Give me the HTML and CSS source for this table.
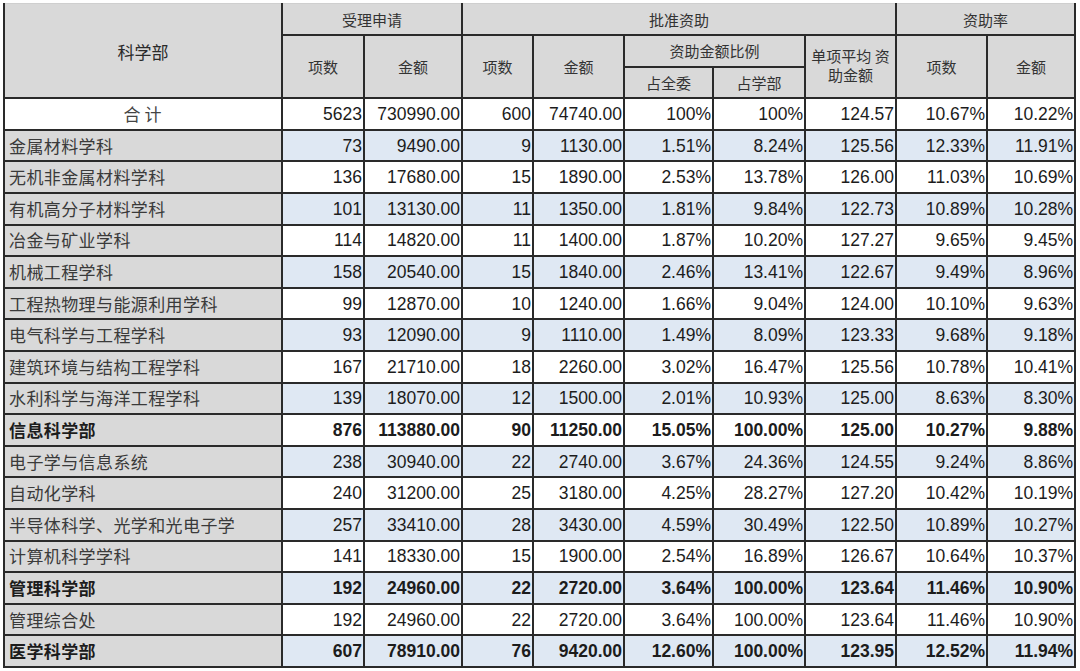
FILE: index.html
```html
<!DOCTYPE html>
<html lang="zh">
<head>
<meta charset="utf-8">
<title>科学部资助统计</title>
<link rel="stylesheet" href="styles.css">
</head>
<body>
<table class="grid">
  <colgroup>
    <col class="c-name"><col class="c-a"><col class="c-b"><col class="c-c"><col class="c-d">
    <col class="c-e"><col class="c-f"><col class="c-g"><col class="c-h"><col class="c-i">
  </colgroup>
  <thead>
    <tr class="hr">
      <th rowspan="3" class="h-main">科学部</th>
      <th colspan="2">受理申请</th>
      <th colspan="5">批准资助</th>
      <th colspan="2">资助率</th>
    </tr>
    <tr class="hr">
      <th rowspan="2">项数</th>
      <th rowspan="2">金额</th>
      <th rowspan="2">项数</th>
      <th rowspan="2">金额</th>
      <th colspan="2">资助金额比例</th>
      <th rowspan="2" class="h-wrap">单项平均 资助金额</th>
      <th rowspan="2">项数</th>
      <th rowspan="2">金额</th>
    </tr>
    <tr class="hr">
      <th>占全委</th>
      <th>占学部</th>
    </tr>
  </thead>
  <tbody>
    <tr class="total"><td class="name center">合计</td><td>5623</td><td>730990.00</td><td>600</td><td>74740.00</td><td>100%</td><td>100%</td><td>124.57</td><td>10.67%</td><td>10.22%</td></tr>
    <tr class="blue"><td class="name">金属材料学科</td><td>73</td><td>9490.00</td><td>9</td><td>1130.00</td><td>1.51%</td><td>8.24%</td><td>125.56</td><td>12.33%</td><td>11.91%</td></tr>
    <tr><td class="name">无机非金属材料学科</td><td>136</td><td>17680.00</td><td>15</td><td>1890.00</td><td>2.53%</td><td>13.78%</td><td>126.00</td><td>11.03%</td><td>10.69%</td></tr>
    <tr class="blue"><td class="name">有机高分子材料学科</td><td>101</td><td>13130.00</td><td>11</td><td>1350.00</td><td>1.81%</td><td>9.84%</td><td>122.73</td><td>10.89%</td><td>10.28%</td></tr>
    <tr><td class="name">冶金与矿业学科</td><td>114</td><td>14820.00</td><td>11</td><td>1400.00</td><td>1.87%</td><td>10.20%</td><td>127.27</td><td>9.65%</td><td>9.45%</td></tr>
    <tr class="blue"><td class="name">机械工程学科</td><td>158</td><td>20540.00</td><td>15</td><td>1840.00</td><td>2.46%</td><td>13.41%</td><td>122.67</td><td>9.49%</td><td>8.96%</td></tr>
    <tr><td class="name">工程热物理与能源利用学科</td><td>99</td><td>12870.00</td><td>10</td><td>1240.00</td><td>1.66%</td><td>9.04%</td><td>124.00</td><td>10.10%</td><td>9.63%</td></tr>
    <tr class="blue"><td class="name">电气科学与工程学科</td><td>93</td><td>12090.00</td><td>9</td><td>1110.00</td><td>1.49%</td><td>8.09%</td><td>123.33</td><td>9.68%</td><td>9.18%</td></tr>
    <tr><td class="name">建筑环境与结构工程学科</td><td>167</td><td>21710.00</td><td>18</td><td>2260.00</td><td>3.02%</td><td>16.47%</td><td>125.56</td><td>10.78%</td><td>10.41%</td></tr>
    <tr class="blue"><td class="name">水利科学与海洋工程学科</td><td>139</td><td>18070.00</td><td>12</td><td>1500.00</td><td>2.01%</td><td>10.93%</td><td>125.00</td><td>8.63%</td><td>8.30%</td></tr>
    <tr class="bold"><td class="name">信息科学部</td><td>876</td><td>113880.00</td><td>90</td><td>11250.00</td><td>15.05%</td><td>100.00%</td><td>125.00</td><td>10.27%</td><td>9.88%</td></tr>
    <tr class="blue"><td class="name">电子学与信息系统</td><td>238</td><td>30940.00</td><td>22</td><td>2740.00</td><td>3.67%</td><td>24.36%</td><td>124.55</td><td>9.24%</td><td>8.86%</td></tr>
    <tr><td class="name">自动化学科</td><td>240</td><td>31200.00</td><td>25</td><td>3180.00</td><td>4.25%</td><td>28.27%</td><td>127.20</td><td>10.42%</td><td>10.19%</td></tr>
    <tr class="blue"><td class="name">半导体科学、光学和光电子学</td><td>257</td><td>33410.00</td><td>28</td><td>3430.00</td><td>4.59%</td><td>30.49%</td><td>122.50</td><td>10.89%</td><td>10.27%</td></tr>
    <tr><td class="name">计算机科学学科</td><td>141</td><td>18330.00</td><td>15</td><td>1900.00</td><td>2.54%</td><td>16.89%</td><td>126.67</td><td>10.64%</td><td>10.37%</td></tr>
    <tr class="blue bold"><td class="name">管理科学部</td><td>192</td><td>24960.00</td><td>22</td><td>2720.00</td><td>3.64%</td><td>100.00%</td><td>123.64</td><td>11.46%</td><td>10.90%</td></tr>
    <tr><td class="name">管理综合处</td><td>192</td><td>24960.00</td><td>22</td><td>2720.00</td><td>3.64%</td><td>100.00%</td><td>123.64</td><td>11.46%</td><td>10.90%</td></tr>
    <tr class="blue bold"><td class="name">医学科学部</td><td>607</td><td>78910.00</td><td>76</td><td>9420.00</td><td>12.60%</td><td>100.00%</td><td>123.95</td><td>12.52%</td><td>11.94%</td></tr>
  </tbody>
</table>
</body>
</html>
```

FILE: styles.css
```css
html, body {
  margin: 0;
  padding: 0;
  background: #ffffff;
}

body {
  padding: 3px 0 0 3px;
  font-family: "Liberation Sans", Arial, "Noto Sans CJK SC", sans-serif;
  color: #1c1c1c;
}

.grid {
  border-collapse: collapse;
  table-layout: fixed;
  width: 1072px;
  border-top: 1px solid #cfcfcf;
}

.c-name { width: 278px; }
.c-a { width: 82px; }
.c-b { width: 98px; }
.c-c { width: 71px; }
.c-d { width: 91px; }
.c-e { width: 89px; }
.c-f { width: 92px; }
.c-g { width: 91px; }
.c-h { width: 91px; }
.c-i { width: 88px; }

.grid th,
.grid td {
  border: 2px solid #2a2a2a;
  padding: 0;
  overflow: hidden;
  white-space: nowrap;
}

.grid thead tr:first-child th {
  border-top: 1px solid #cfcfcf;
}

.hr {
  height: 31.6px;
}

.grid th {
  background: #d9d9d9;
  font-family: "Noto Sans CJK SC", sans-serif;
  font-weight: 400;
  font-size: 15px;
  color: #333333;
  text-align: center;
  vertical-align: middle;
}

.grid th.h-main {
  font-size: 17px;
  padding-top: 2px;
  color: #2a2a2a;
}

.grid th.h-wrap {
  white-space: normal;
  line-height: 19px;
  padding: 0 1px 4px;
}

.grid tbody tr {
  height: 31.6px;
}

.grid td {
  font-size: 17.5px;
  text-align: right;
  padding-right: 1px;
  vertical-align: middle;
  line-height: 20px;
  background: #ffffff;
}

.grid tr.blue td {
  background: #dfe8f3;
}

.grid tr td.name {
  background: #d9d9d9;
  text-align: left;
  padding-left: 4px;
  font-family: "Noto Sans CJK SC", sans-serif;
  font-size: 17px;
  letter-spacing: 0.4px;
  color: #3a3a3a;
}

.grid tr.total td.name {
  background: #ffffff;
  text-align: center;
  letter-spacing: 4px;
  color: #444444;
}

.grid tr.bold td {
  font-weight: 700;
}

.grid tr.bold td.name {
  color: #1c1c1c;
}
```
